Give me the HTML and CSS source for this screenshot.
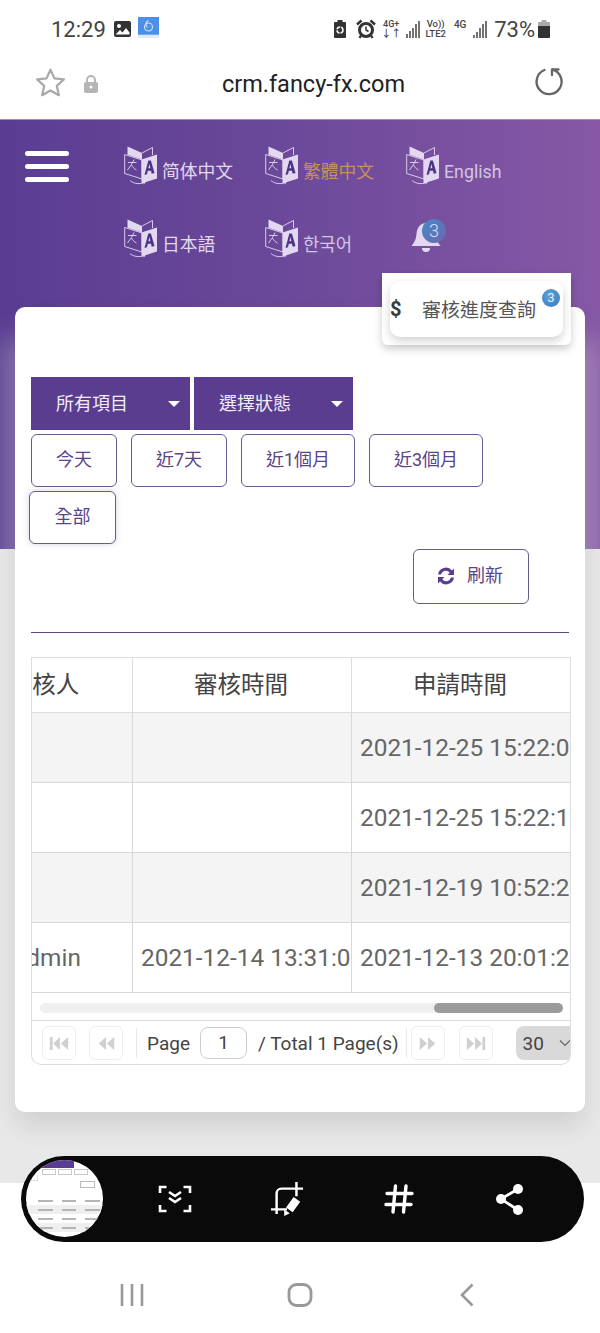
FILE: index.html
```html
<!DOCTYPE html>
<html lang="zh-Hant">
<head>
<meta charset="utf-8">
<title>crm.fancy-fx.com</title>
<link rel="stylesheet" href="styles.css">
</head>
<body>
<svg class="defs" width="0" height="0" aria-hidden="true">
  <symbol id="tr" viewBox="0 0 34 40">
    <path d="M.7 8.500 18 14v19L.7 27.500Z" fill="none" stroke="currentColor" stroke-width=".9"/>
    <path d="M3.500 .5 18 7v6.500L3.500 8.800Z" fill="currentColor"/>
    <path d="M18 7 28.500 1.500V9" fill="none" stroke="currentColor" stroke-width=".9"/>
    <path d="M17.500 13.500 33 8.500V32.500L17.500 37.500Z" fill="currentColor"/>
    <path d="M20.500 29 24.300 14.500h2.600L30.500 27l-2.800.7-.7-2.900h-3.200l-.8 3.500Zm3.900-6.700h2l-1-4.400Z" fill="#4b3385"/>
    <path d="M4 16.500h8.500M10 13.500 7.500 18.500 3.500 24M7.500 19c1 2 2.500 3.600 5 5" fill="none" stroke="currentColor" stroke-width=".9"/>
    <path d="M6 34.500c4 3.500 10 4 15 1.800M21 36.300l-2.500-.6M21 36.300l-1.200 1.900" fill="none" stroke="currentColor" stroke-width=".9"/>
  </symbol>
</svg>

<div class="screen">
  <header class="status">
    <span class="clock">12:29</span>
    <svg class="st-pic" viewBox="0 0 17 16"><rect width="17" height="16" rx="2" fill="#333"/><circle cx="5" cy="5" r="2" fill="#fff"/><path d="M1.500 13.500 6 9l2.500 2.500L12 7l3.500 4.500v2Z" fill="#fff"/></svg>
    <span class="st-app"><svg viewBox="0 0 20 20"><rect width="20" height="17" fill="#4c8fe6"/><rect y="17" width="20" height="3" fill="#dfe9f7"/><circle cx="10" cy="9.500" r="3.800" fill="none" stroke="#d8e8fb" stroke-width="1"/><path d="M10 3c-3 2-3 5-1 7" fill="none" stroke="#d8e8fb"/></svg></span>
    <span class="st-gap"></span>
    <svg class="st-batt" viewBox="0 0 12 18"><path d="M3.500 0h5v2H11a1 1 0 0 1 1 1v14a1 1 0 0 1-1 1H1a1 1 0 0 1-1-1V3a1 1 0 0 1 1-1h2.500Z" fill="#333"/><circle cx="6" cy="10" r="3" fill="none" stroke="#fff" stroke-width="1.500" stroke-dasharray="4 1"/></svg>
    <svg class="st-alarm" viewBox="0 0 20 20"><circle cx="10" cy="11" r="6.500" fill="#fff" stroke="#333" stroke-width="3"/><path d="M10 7.500V11l2.500 1.500" fill="none" stroke="#333" stroke-width="1.500"/><path d="M1 5.500 5.500 1.500M19 5.500l-4.500-4M5 16.500 3.500 19M15 16.500 16.500 19" stroke="#333" stroke-width="2.400"/></svg>
    <span class="net"><b>4G+</b><b class="arrows">↓↑</b></span>
    <svg class="bars b1" viewBox="0 0 15 18"><path d="M1 18v-4M4 18v-7M7 18V8M10 18V4M13 18V1" stroke="#444" stroke-width="1.500"/></svg>
    <span class="net volte"><b>Vo))</b><b>LTE2</b></span>
    <span class="net g4"><b>4G</b></span>
    <svg class="bars" viewBox="0 0 15 18"><path d="M1 18v-3M4 18v-6M7 18V8M10 18V4M13 18V1" stroke="#444" stroke-width="1.500"/></svg>
    <span class="pct">73%</span>
    <svg class="st-cell" viewBox="0 0 12 18"><path d="M3.500 0h5v2H12v5H0V2h3.500Z" fill="#aaa"/><path d="M0 6h12v11a1 1 0 0 1-1 1H1a1 1 0 0 1-1-1Z" fill="#333"/></svg>
  </header>

  <div class="addr">
    <svg class="star" viewBox="0 0 32 32"><path d="M16 3.500 19.800 12l9.200 1-6.900 6.200 2 9.100L16 23.700l-8.100 4.600 2-9.100L3 13l9.200-1Z" fill="none" stroke="#aaa" stroke-width="2.200" stroke-linejoin="round"/></svg>
    <svg class="lock" viewBox="0 0 16 20"><path d="M4 9V6a4 4 0 0 1 8 0v3" fill="none" stroke="#b5b5b5" stroke-width="2"/><rect x="1" y="8" width="14" height="11" rx="2" fill="#b5b5b5"/><circle cx="8" cy="13" r="1.500" fill="#fff"/></svg>
    <span class="url">crm.fancy-fx.com</span>
    <svg class="reload" viewBox="0 0 32 32"><path d="M19.500 4.600a12.500 12.500 0 1 1-8 .4" fill="none" stroke="#666" stroke-width="2.300" stroke-linecap="round"/><path d="M19 10V4.500h6.500" fill="none" stroke="#666" stroke-width="2.300" stroke-linecap="round" stroke-linejoin="round"/></svg>
  </div>

  <section class="hero">
    <button class="burger" aria-label="menu"><i></i><i></i><i></i></button>
    <nav class="langs">
      <a class="lang"><svg class="tr"><use href="#tr"/></svg><span>简体中文</span></a>
      <a class="lang active"><svg class="tr"><use href="#tr"/></svg><span>繁體中文</span></a>
      <a class="lang dim"><svg class="tr"><use href="#tr"/></svg><span>English</span></a>
      <a class="lang"><svg class="tr"><use href="#tr"/></svg><span>日本語</span></a>
      <a class="lang dim"><svg class="tr"><use href="#tr"/></svg><span lang="ko">한국어</span></a>
      <a class="bell">
        <svg viewBox="0 0 30 32"><path d="M15 1c-6 0-9 5-9.500 11-.3 5-2 8-5 12h29c-3-4-4.700-7-5-12C24 6 21 1 15 1Z" fill="#e4d8f0"/><path d="M11 26h8a4 4 0 0 1-8 0Z" fill="#e4d8f0"/></svg>
        <em class="bell-badge">3</em>
      </a>
    </nav>
  </section>

  <main class="ground">
    <div class="card">
      <div class="selects">
        <div class="select"><span>所有項目</span><i class="caret"></i></div>
        <div class="select"><span>選擇狀態</span><i class="caret"></i></div>
      </div>
      <div class="ranges">
        <button class="range w86">今天</button>
        <button class="range w96">近7天</button>
        <button class="range w114">近1個月</button>
        <button class="range w114">近3個月</button>
        <button class="range w87 all">全部</button>
      </div>
      <div class="refresh-row">
        <button class="refresh">
          <svg viewBox="0 0 20 20"><path d="M2 8.500A8 8 0 0 1 16 4.500l2-2V9h-6.500l2.300-2.300A5 5 0 0 0 5 8.500Z" fill="#5a3d92"/><path d="M18 11.500A8 8 0 0 1 4 15.500l-2 2V11h6.500l-2.300 2.300A5 5 0 0 0 15 11.500Z" fill="#5a3d92"/></svg>
          <span>刷新</span>
        </button>
      </div>
      <hr class="rule">
      <div class="grid-wrap">
        <div class="grid-clip">
          <table class="grid">
            <thead><tr><th class="c1">審核人</th><th class="c2">審核時間</th><th class="c3">申請時間</th></tr></thead>
            <tbody>
              <tr class="odd"><td></td><td></td><td>2021-12-25 15:22:0</td></tr>
              <tr><td></td><td></td><td>2021-12-25 15:22:1</td></tr>
              <tr class="odd"><td></td><td></td><td>2021-12-19 10:52:2</td></tr>
              <tr><td>admin</td><td>2021-12-14 13:31:0</td><td>2021-12-13 20:01:2</td></tr>
            </tbody>
          </table>
        </div>
        <div class="scroll"><div class="track"><div class="thumb"></div></div></div>
        <div class="pager">
          <span class="pg"><svg viewBox="0 0 24 16"><path d="M2 1h3v14H2ZM13 1v14L5.500 8ZM22 1v14L14 8Z" fill="#d0d0d0"/></svg></span>
          <span class="pg"><svg viewBox="0 0 24 16"><path d="M12 1v14L4 8ZM21 1v14L13 8Z" fill="#d0d0d0"/></svg></span>
          <i class="sep"></i>
          <span class="lbl">Page</span>
          <span class="pg-input">1</span>
          <span class="lbl">/ Total 1 Page(s)</span>
          <i class="sep sep2"></i>
          <span class="pg next"><svg viewBox="0 0 24 16"><path d="M3 1v14l8-7ZM12 1v14l8-7Z" fill="#d0d0d0"/></svg></span>
          <span class="pg"><svg viewBox="0 0 24 16"><path d="M2 1v14l8-7ZM11 1v14l7.500-7ZM19 1h3v14h-3Z" fill="#d0d0d0"/></svg></span>
          <span class="size"><span>30</span><svg viewBox="0 0 12 8"><path d="M1 1.500 6 6.500l5-5" fill="none" stroke="#666" stroke-width="1.200"/></svg></span>
        </div>
      </div>
    </div>
  </main>
  <footer class="navbar">
    <svg class="nv nv1" viewBox="0 0 24 24"><path d="M2 1v22M12 1v22M22 1v22" stroke="#999" stroke-width="2.600" fill="none"/></svg>
    <svg class="nv nv2" viewBox="0 0 26 24"><rect x="2" y="1.500" width="22" height="21" rx="7.500" fill="none" stroke="#999" stroke-width="2.800"/></svg>
    <svg class="nv nv3" viewBox="0 0 16 24"><path d="M13.500 1.500 3 12l10.500 10.500" fill="none" stroke="#999" stroke-width="2.600"/></svg>
  </footer>

  <!-- overlays -->
  <div class="popup">
    <div class="pop-item">
      <span class="dollar">$</span>
      <span class="pop-text">審核進度查詢</span>
      <em class="pop-badge">3</em>
    </div>
  </div>

  <div class="toolbar">
    <div class="shot">
      <div class="s-top"><i></i></div>
      <div class="s-btns"><i></i><i></i><i></i></div>
      <div class="s-all"><i></i></div>
      <div class="s-ref"><i></i></div>
      <div class="s-rows">
        <div class="s-row head"><i></i><i></i><i></i></div>
        <div class="s-row alt"><i></i><i></i><i></i></div>
        <div class="s-row"><i></i><i></i><i></i></div>
        <div class="s-row alt"><i></i><i></i><i></i></div>
      </div>
    </div>
    <svg class="tb scan" viewBox="0 0 34 30"><path d="M2 9V3h6.500M25.500 3H32v6M2 21v6h6.500M32 21v6h-6.500" fill="none" stroke="#fff" stroke-width="2.600"/><path d="m11 8 6 4 6-4M11 14l6 4 6-4" fill="none" stroke="#fff" stroke-width="2.600"/></svg>
    <svg class="tb" viewBox="0 0 36 36"><path d="M1 29h17M7 34V12a5 5 0 0 1 5-5h23M28 0v15" fill="none" stroke="#fff" stroke-width="2.600"/><path d="m25 16 7 5-8 11-7-5Z" fill="#fff"/><path d="m15 29 6 4-6 3Z" fill="#fff"/></svg>
    <svg class="tb" viewBox="0 0 34 34"><path d="M13.500 4 11 30M24 4l-2.500 26M5 11.500h25M4 22.500h25" fill="none" stroke="#fff" stroke-width="3.400" stroke-linecap="round"/></svg>
    <svg class="tb" viewBox="0 0 34 34"><circle cx="24" cy="7" r="5" fill="#fff"/><circle cx="7" cy="17" r="5" fill="#fff"/><circle cx="24" cy="28" r="5" fill="#fff"/><path d="M24 7 7 17l17 11" fill="none" stroke="#fff" stroke-width="2.800"/></svg>
  </div>
</div>
</body>
</html>
```
FILE: styles.css
```css
* { box-sizing: border-box; }
html, body { margin: 0; padding: 0; }
body { font-family: Roboto, "Noto Sans CJK TC", sans-serif; background: #fff; }
.defs { position: absolute; }
.screen { position: relative; width: 600px; height: 1333px; overflow: hidden; display: flex; flex-direction: column; background: #fff; }

/* status */
.status { height: 54px; flex: none; display: flex; align-items: center; padding: 4px 50px 0 51px; color: #444; }
.clock { font-size: 22px; width: 54px; }
.st-pic { width: 17px; height: 16px; margin-left: 9px; }
.st-app { width: 21px; height: 21px; margin-left: 7px; margin-top: -4px; }
.st-app svg { display: block; width: 100%; height: 100%; }
.st-gap { flex: 1; }
.st-batt { width: 12px; height: 18px; }
.st-alarm { width: 20px; height: 20px; margin-left: 10px; }
.net { display: flex; flex-direction: column; align-items: center; font-size: 9px; line-height: 10px; color: #444; margin-left: 7px; width: 16px; }
.net b { font-weight: 500; }
.net .arrows { font-size: 10px; }
.bars { width: 15px; height: 18px; margin-left: 6px; }
.b1 { margin-left: 7px; }
.volte { margin-left: 3px; width: 23px; font-size: 9.500px; }
.g4 { margin-left: 6px; margin-top: -9px; width: 14px; font-size: 10px; }
.pct { font-size: 22px; margin-left: 6px; }
.st-cell { width: 12px; height: 18px; margin-left: 3px; }

/* address */
.addr { height: 65px; flex: none; display: flex; align-items: center; padding: 0 35px 6px 34px; }
.star { width: 33px; height: 33px; flex: none; margin-top: -2px; }
.lock { width: 16px; height: 20px; flex: none; margin-left: 16px; }
.url { flex: 1; text-align: center; font-size: 23.500px; color: #222; padding-right: 5px; }
.reload { width: 32px; height: 32px; flex: none; margin-top: -5px; }

/* hero */
.hero { position: relative; overflow: hidden; height: 430px; flex: none; display: flex; align-items: flex-start; padding: 26px 0 0 25px; border-top: 1px solid #a08fb8; background: linear-gradient(90deg, #5a3d92 0%, #6a4899 45%, #8658a5 100%); }
.hero::after { content: ""; position: absolute; left: 15px; right: 15px; top: 210px; bottom: -60px; box-shadow: 0 20px 26px 12px rgba(255,255,255,.3); }
.burger { width: 44px; padding: 0; border: 0; background: none; display: flex; flex-direction: column; gap: 8px; margin-top: 5px; flex: none; }
.burger i { display: block; height: 5px; background: #fff; border-radius: 3px; }
.langs { margin: 0 0 0 55px; display: grid; grid-template-columns: repeat(3, 141px); grid-auto-rows: 73px; }
.lang { display: flex; align-items: flex-start; font-size: 17.800px; color: #e3d9ee; }
.lang span { margin: 14px 0 0 4px; line-height: 24px; }
.lang.dim span { color: #d3c6e3; }
.tr { width: 34px; height: 40px; color: #e4d8f0; flex: none; }
.lang.active span { color: #c5915f; }
.bell { position: relative; margin: 3px 0 0 5px; width: 30px; height: 32px; }
.bell svg { display: block; width: 30px; height: 32px; }
.bell-badge { position: absolute; left: 11px; top: -3px; width: 24px; height: 24px; border-radius: 50%; background: linear-gradient(135deg, #4a88c8, #6a68b0); color: #cfe0f5; font: 300 18px/24px Roboto, sans-serif; text-align: center; }

/* ground + card */
.ground { background: #e8e8e8; padding: 0 15px; height: 634px; flex: none; }
.card { margin-top: -242px; height: 805px; position: relative; background: #fff; border-radius: 10px; padding: 70px 16px 0; box-shadow: 0 14px 26px rgba(0,0,0,.1); }
.selects { display: flex; gap: 4px; }
.select { width: 159px; height: 53px; background: #5a3d8f; color: #f1ecf7; display: flex; align-items: center; justify-content: space-between; padding: 0 10px 0 25px; font-size: 18px; }
.select span { margin-top: -3px; }
.caret { width: 0; height: 0; border: 6px solid transparent; border-top: 6px solid #fff; border-bottom: 0; }
.ranges { display: flex; flex-wrap: wrap; gap: 4px 14px; margin-top: 4px; }
.range { height: 53px; background: #fff; border: 1px solid #6a5a92; border-radius: 6px; color: #5a4488; font: 400 18px/1 Roboto, "Noto Sans CJK TC", sans-serif; padding: 0 0 2px; }
.w86 { width: 86px; }
.w87 { width: 87px; }
.w96 { width: 96px; }
.w114 { width: 114px; }
.all { margin-left: -2px; box-shadow: 0 0 6px rgba(90,68,136,.25); }
.refresh-row { display: flex; justify-content: flex-end; padding-right: 40px; margin-top: 5px; }
.refresh { width: 116px; height: 55px; background: #fff; border: 1px solid #6a5a92; border-radius: 6px; display: flex; align-items: center; justify-content: center; gap: 11px; color: #5a4488; font: 400 18px/1 Roboto, "Noto Sans CJK TC", sans-serif; padding: 0 3px 2px 0; }
.refresh svg { width: 20px; height: 20px; }
.rule { border: 0; border-top: 1px solid #5a4a80; margin: 28px 0 24px; width: 538px; }

/* grid */
.grid-wrap { width: 540px; height: 408px; border: 1px solid #ddd; border-top: 0; border-radius: 0 0 10px 10px; overflow: hidden; }
.grid-clip { width: 538px; overflow: hidden; }
.grid { border-collapse: collapse; table-layout: fixed; width: 609px; margin-left: -71px; font-size: 24.400px; }
.grid th { height: 55px; font-weight: 400; font-size: 23.500px; color: #444; border: 1px solid #ddd; padding: 0 2px 4px 0; white-space: nowrap; }
.grid th.c1 { padding-right: 6px; }
.grid td { height: 70px; color: #666; border: 1px solid #d8d8d8; padding: 0 0 0 8px; white-space: nowrap; overflow: hidden; }
.grid td:first-child { padding-left: 0; text-align: center; }
.grid .odd td { background: #f4f4f4; }
.c1 { width: 171px; }
.c2 { width: 219px; }
.c3 { width: 219px; }
.scroll { height: 28px; padding: 10px 7px 0 8px; border-bottom: 1px solid #ddd; }
.track { height: 10px; background: #f0f0f0; border-radius: 5px; display: flex; justify-content: flex-end; }
.thumb { width: 129px; background: #9b9b9b; border-radius: 5px; }
.pager { height: 44px; display: flex; align-items: center; padding-left: 10px; font-size: 19px; color: #444; white-space: nowrap; }
.pg { width: 34px; height: 34px; border: 1px solid #eee; border-radius: 6px; display: flex; align-items: center; justify-content: center; flex: none; margin-right: 13px; }
.pg svg { width: 22px; height: 15px; }
.sep { width: 1px; height: 30px; background: #e8e8e8; flex: none; margin-right: 10px; }
.sep2 { margin: 0 4px 0 7px; }
.lbl { flex: none; }
.pg-input { width: 47px; height: 32px; border: 1px solid #ccc; border-radius: 8px; text-align: center; line-height: 30px; margin: 0 11px 0 10px; flex: none; }
.pg.next { margin-right: 14px; }
.size { margin-left: 10px; width: 60px; height: 34px; flex: none; background: #d9d9d9; border-radius: 8px 0 0 8px; display: flex; align-items: center; padding-left: 7px; gap: 15px; }
.size svg { width: 12px; height: 8px; flex: none; }

/* nav */
.navbar { flex: 1; display: flex; align-items: flex-start; padding: 100px 0 0 120px; }
.nv { height: 24px; flex: none; }
.nv1 { width: 24px; }
.nv2 { width: 26px; margin-left: 143px; }
.nv3 { width: 16px; margin-left: 146px; }

/* overlays */
.popup { position: absolute; left: 382px; top: 273px; width: 189px; height: 72px; background: #fff; border-radius: 0 0 6px 6px; box-shadow: 0 4px 8px rgba(0,0,0,.2); padding: 8px; }
.pop-item { position: relative; height: 56px; background: #fff; border-radius: 10px; box-shadow: 0 4px 10px rgba(0,0,0,.18); display: flex; align-items: center; color: #555; font-size: 19px; }
.dollar { font-weight: 700; font-size: 20px; color: #3a3a3a; width: 32px; }
.pop-text { margin-top: -2px; }
.pop-badge { position: absolute; right: 3px; top: 8px; width: 18px; height: 18px; border-radius: 50%; background: radial-gradient(circle at 40% 35%, #5aa2dc, #3c78b8); color: #e3eefb; font: 400 13px/18px Roboto, sans-serif; text-align: center; }
.toolbar { position: absolute; left: 21px; top: 1156px; width: 563px; height: 86px; border-radius: 43px; background: #0a0a0a; display: flex; align-items: center; padding-left: 137px; }
.tb { width: 34px; height: 34px; flex: none; margin-right: 78px; }
.tb.scan { height: 30px; }
.shot { position: absolute; left: 5px; top: 4px; width: 77px; height: 77px; border-radius: 50%; background: #fff; overflow: hidden; display: flex; flex-direction: column; filter: blur(.4px); }
.s-top { height: 8px; padding-left: 14px; }
.s-top i { display: block; width: 34px; height: 8px; background: #5a3d92; }
.s-btns { display: flex; gap: 2px; padding: 1px 0 0 16px; }
.s-btns i { width: 14px; height: 6px; border: 1px solid #c8c8c8; flex: none; }
.s-all { height: 6px; padding-left: 4px; }
.s-all i { display: block; width: 8px; height: 6px; border: 1px solid #ddd; border-top: 0; }
.s-ref { display: flex; justify-content: flex-end; padding: 0 8px 0 0; }
.s-ref i { width: 15px; height: 7px; border: 1px solid #bbb; }
.s-rows { margin-top: 8px; }
.s-row { height: 9px; display: flex; gap: 9px; align-items: center; padding: 0 3px 0 12px; }
.s-row i { flex: 1; height: 2px; background: #b5b5b5; }
.s-row.alt { background: #efefef; }
```
